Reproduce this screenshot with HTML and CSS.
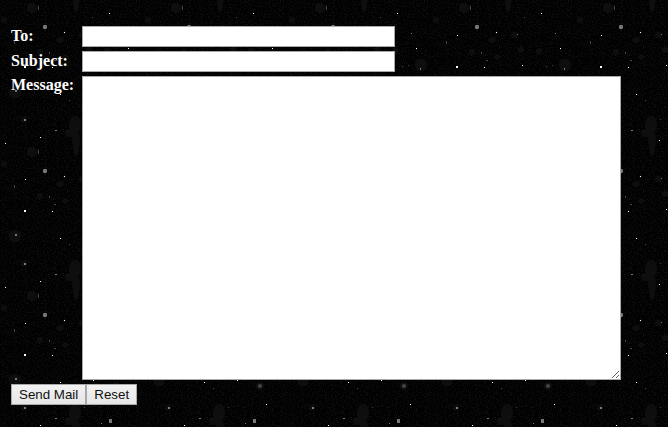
FILE: index.html
```html
<!DOCTYPE html>
<html lang="en">
<head>
<meta charset="utf-8">
<title>Send Mail</title>
<link rel="stylesheet" href="styles.css">
</head>
<body>
<form class="mail-form">
  <table class="mail-table">
    <tr>
      <th class="label">To:</th>
      <td><input class="field" type="text"></td>
    </tr>
    <tr>
      <th class="label">Subject:</th>
      <td><input class="field" type="text"></td>
    </tr>
    <tr>
      <th class="label label-top">Message:</th>
      <td><textarea class="message"></textarea></td>
    </tr>
    <tr>
      <td colspan="2" class="actions"><button class="btn" type="submit">Send Mail</button><button class="btn" type="reset">Reset</button></td>
    </tr>
  </table>
</form>
</body>
</html>
```
FILE: styles.css
```css
html { background: #000; }
body {
  margin: 0;
  padding: 23px 8px 0;
  height: 427px;
  box-sizing: border-box;
  overflow: hidden;
  background-color: #000;
  background-size: 144px 144px;
  background-image: url("data:image/svg+xml,%3Csvg xmlns='http://www.w3.org/2000/svg' width='144' height='144' shape-rendering='crispEdges'%3E%3Cdefs%3E%3Cfilter id='n' x='0' y='0' width='100%25' height='100%25' color-interpolation-filters='sRGB'%3E%3CfeTurbulence type='fractalNoise' baseFrequency='0.9' numOctaves='2' seed='4' stitchTiles='stitch'/%3E%3CfeColorMatrix values='0.2 0 0 0 -0.09 0.2 0 0 0 -0.09 0.2 0 0 0 -0.09 0 0 0 0 1'/%3E%3C/filter%3E%3C/defs%3E%3Crect width='144' height='144' filter='url(%23n)'/%3E%3Cg fill='%230e0e0e' shape-rendering='auto'%3E%3Cellipse cx='75' cy='125' rx='6' ry='9'/%3E%3Cellipse cx='70' cy='133' rx='5' ry='4'/%3E%3Cellipse cx='76' cy='140' rx='4' ry='8'/%3E%3Cellipse cx='76' cy='3' rx='3' ry='8'/%3E%3Ccircle cx='32' cy='8' r='5'/%3E%3Ccircle cx='133' cy='65' r='6'/%3E%3Ccircle cx='15' cy='92' r='6'/%3E%3Ccircle cx='116' cy='98' r='4'/%3E%3Ccircle cx='89' cy='50' r='3'/%3E%3Ccircle cx='107' cy='51' r='3'/%3E%3Ccircle cx='82' cy='35' r='3'/%3E%3Ccircle cx='40' cy='52' r='3'/%3E%3Ccircle cx='65' cy='57' r='2.5'/%3E%3Ccircle cx='4' cy='20' r='3'/%3E%3Ccircle cx='60' cy='40' r='3'/%3E%3Ccircle cx='24' cy='120' r='3'/%3E%3C/g%3E%3Ccircle cx='45' cy='27' r='2.2' fill='%23777' shape-rendering='auto'/%3E%3Ccircle cx='116' cy='98' r='2' fill='%23444' shape-rendering='auto'/%3E%3Cg fill='%23fff'%3E%3Crect x='109' y='13' width='1' height='1'/%3E%3Crect x='25' y='35' width='1' height='1'/%3E%3Crect x='64' y='32' width='1' height='1'/%3E%3Crect x='128' y='48' width='1' height='1'/%3E%3Crect x='24' y='66' width='2' height='2'/%3E%3Crect x='52' y='67' width='1' height='1'/%3E%3Crect x='90' y='65' width='1' height='1'/%3E%3Crect x='60' y='94' width='1' height='1'/%3E%3Crect x='93' y='92' width='1' height='1'/%3E%3Crect x='122' y='116' width='1' height='1'/%3E%3Crect x='40' y='137' width='1' height='1'/%3E%3Crect x='5' y='143' width='1' height='1'/%3E%3Crect x='83' y='140' width='1' height='1'/%3E%3C/g%3E%3Cg fill='%23777'%3E%3Crect x='109' y='131' width='3' height='4'/%3E%3Crect x='123' y='33' width='1' height='1'/%3E%3Crect x='85' y='34' width='1' height='1'/%3E%3Crect x='132' y='68' width='1' height='2'/%3E%3Crect x='15' y='90' width='2' height='2'/%3E%3Crect x='24' y='119' width='2' height='2'/%3E%3Crect x='55' y='130' width='2' height='1'/%3E%3Crect x='101' y='135' width='1' height='1'/%3E%3C/g%3E%3Cg fill='%23444'%3E%3Crect x='38' y='6' width='1' height='4'/%3E%3Crect x='114' y='66' width='1' height='1'/%3E%3Crect x='120' y='65' width='1' height='1'/%3E%3Crect x='14' y='41' width='1' height='3'/%3E%3Crect x='49' y='52' width='1' height='2'/%3E%3Crect x='54' y='60' width='2' height='1'/%3E%3Crect x='69' y='100' width='1' height='1'/%3E%3Crect x='84' y='119' width='1' height='1'/%3E%3Crect x='92' y='17' width='1' height='1'/%3E%3C/g%3E%3C/svg%3E");
}
.mail-form { margin: 0; }
.mail-table { border-collapse: separate; border-spacing: 2px; }
.mail-table td, .mail-table th { padding: 1px; }
.mail-table .label {
  width: 67px;
  box-sizing: content-box;
  padding-top: 2px;
  vertical-align: top;
  text-align: left;
  color: #fff;
  font: bold 16px/18px "Liberation Serif", "Times New Roman", serif;
}
.mail-table .label-top { padding-top: 1px; }
.field, .message {
  display: block;
  box-sizing: border-box;
  margin: 0;
  padding: 1px 2px;
  background: #fff;
  border: 1px solid #a9a9a9;
  border-radius: 0;
  outline: 0;
}
.field { width: 313px; height: 21px; }
.message { width: 539px; height: 304px; }
.actions { font-size: 0; }
.btn {
  height: 21px;
  margin: 0;
  padding: 0 7px;
  border: 1px solid #a9a9a9;
  border-radius: 0;
  background: linear-gradient(#f2f2f2, #e6e6e6);
  color: #111;
  font: 13.333px/17px "Liberation Sans", Arial, sans-serif;
}
```
